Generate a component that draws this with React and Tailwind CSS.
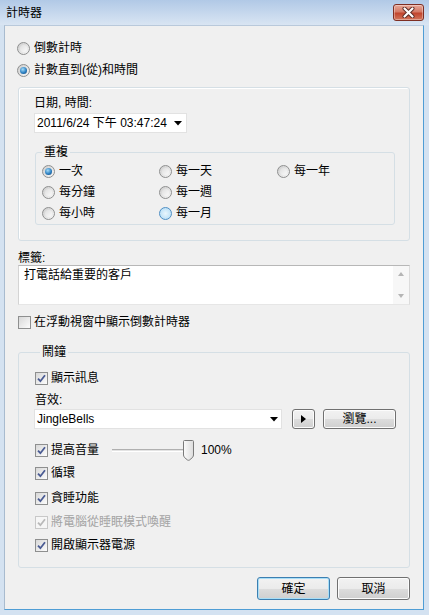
import React from "react";

function Radio({ checked, hover }) {
  if (hover)
    return (
      <span className="flex items-center justify-center w-[13px] h-[13px] rounded-full border border-[#4f8fc4] bg-[radial-gradient(circle_at_50%_50%,#e9f6fd,#aedaf5)] shrink-0" />
    );
  return (
    <span className="flex items-center justify-center w-[13px] h-[13px] rounded-full border border-[#8e8f8f] bg-[linear-gradient(135deg,#cdcdcd,#f7f7f7)] shrink-0">
      {checked ? (
        <span className="w-[7px] h-[7px] rounded-full bg-[radial-gradient(circle_at_40%_35%,#a5dcf8,#2c80c2_55%,#0c3b6c)]" />
      ) : (
        <span className="w-[7px] h-[7px] rounded-full bg-[linear-gradient(135deg,#dedede,#fafafa)]" />
      )}
    </span>
  );
}

function Check({ checked, disabled }) {
  return (
    <span
      className={
        disabled
          ? "flex items-center justify-center w-[13px] h-[13px] border border-[#c8c8c8] bg-[#f6f6f6] shrink-0"
          : "flex items-center justify-center w-[13px] h-[13px] border border-[#8e8f8f] bg-[linear-gradient(135deg,#d8d8d8,#fcfcfc)] shrink-0"
      }
    >
      {checked && (
        <svg width="9" height="9" viewBox="0 0 9 9">
          <path
            d="M1 4.6 L3.4 7.2 L8 1.2"
            fill="none"
            stroke={disabled ? "#b9b9b9" : "#4a5b93"}
            strokeWidth="1.8"
          />
        </svg>
      )}
    </span>
  );
}

function RadioRow({ label, checked, hover }) {
  return (
    <div className="flex items-center h-[16px] gap-[4px]">
      <Radio checked={checked} hover={hover} />
      <span className="leading-[16px]">{label}</span>
    </div>
  );
}

function CheckRow({ label, checked, disabled, className = "" }) {
  return (
    <div className={"flex items-center h-[16px] gap-[3px] " + className}>
      <Check checked={checked} disabled={disabled} />
      <span className={disabled ? "leading-[16px] text-[#a3a3a3]" : "leading-[16px]"}>{label}</span>
    </div>
  );
}

function DownArrow() {
  return (
    <svg width="8" height="5" viewBox="0 0 8 5">
      <path d="M0 0 H8 L4 4.5 Z" fill="#000" />
    </svg>
  );
}

export default function App() {
  return (
    <div className="w-[429px] h-[615px] flex flex-col bg-[#d4e2f1] font-['Liberation_Sans','Noto_Sans_CJK_TC',sans-serif] text-[12px] text-black overflow-hidden">
      {/* Title bar */}
      <div className="h-[25px] shrink-0 flex items-center justify-between pl-[6px] pr-[5px] bg-[linear-gradient(to_bottom,#b1c9e6,#d9e5f3)]">
        <span className="text-[12px] leading-[16px] text-black">計時器</span>
        <div className="w-[31px] h-[17px] rounded-[3px] border border-[#7e2e22] bg-[linear-gradient(to_bottom,#e8a898,#d47a66_45%,#c2452d_55%,#d2765c)] flex items-center justify-center shadow-[inset_0_0_0_1px_rgba(255,255,255,0.35)]">
          <svg width="13" height="11" viewBox="0 0 13 11">
            <path d="M2.5 1.5 L10.5 9.5 M10.5 1.5 L2.5 9.5" stroke="#5a2a22" strokeWidth="4" strokeLinecap="round" />
            <path d="M2.5 1.5 L10.5 9.5 M10.5 1.5 L2.5 9.5" stroke="#ffffff" strokeWidth="2.2" strokeLinecap="round" />
          </svg>
        </div>
      </div>

      {/* Client area */}
      <div className="flex-1 ml-[4px] mr-[5px] mb-[5px] bg-[#f0f0f0] border border-t-[#b9c9db] border-l-[#a8bbcf] border-r-[#4f9dd5] border-b-[#4f9dd5] flex flex-col pl-[13px] pr-[13px] pt-[14px]">
        <div className="pl-[-1px] flex flex-col gap-[6px] -ml-[1px]">
          <RadioRow label="倒數計時" />
          <RadioRow label="計數直到(從)和時間" checked />
        </div>

        {/* Date panel */}
        <div className="mt-[9px] border border-[#d5dfe5] rounded-[3px] shadow-[inset_1px_1px_0_#ffffff] pt-[8px] pl-[15px] pr-[14px] pb-[15px] flex flex-col">
          <div className="leading-[14px] h-[14px]">日期, 時間:</div>
          <div className="mt-[3px] w-[153px] h-[20px] bg-white border border-[#e2e2e2] flex items-center justify-between pl-[2px] pr-[4px]">
            <span className="leading-[16px]">2011/6/24 下午 03:47:24</span>
            <DownArrow />
          </div>
          <fieldset className="mt-[12px] ml-[1px] border border-[#d5dfe5] rounded-[3px] pl-[6px] pt-[4px] pb-[3px]">
            <legend className="px-[2px] leading-[14px]">重複</legend>
            <div className="grid grid-cols-[117px_118px_1fr] grid-rows-[16px_16px_16px] gap-y-[5px]">
              <RadioRow label="一次" checked />
              <RadioRow label="每一天" />
              <RadioRow label="每一年" />
              <RadioRow label="每分鐘" />
              <RadioRow label="每一週" />
              <div />
              <RadioRow label="每小時" />
              <RadioRow label="每一月" hover />
            </div>
          </fieldset>
        </div>

        {/* Label */}
        <div className="mt-[10px] leading-[14px] h-[14px]">標籤:</div>
        <div className="h-[40px] bg-white border border-t-[#b7b7b7] border-l-[#d4d4d4] border-r-[#dcdcdc] border-b-[#e6e6e6] flex">
          <div className="flex-1 pl-[5px] pt-[1px] leading-[16px]">打電話給重要的客戶</div>
          <div className="w-[16px] bg-[#f7f7f7] flex flex-col items-center justify-between py-[6px]">
            <svg width="6" height="4" viewBox="0 0 6 4">
              <path d="M0 4 H6 L3 0 Z" fill="#b5b5b5" />
            </svg>
            <svg width="6" height="4" viewBox="0 0 6 4">
              <path d="M0 0 H6 L3 4 Z" fill="#b5b5b5" />
            </svg>
          </div>
        </div>

        <CheckRow label="在浮動視窗中顯示倒數計時器" className="mt-[9px]" />

        {/* Alarm */}
        <fieldset className="mt-[15px] border border-[#d5dfe5] rounded-[3px] pl-[16px] pr-[13px] pt-[11px] pb-[14px]">
          <legend className="ml-[5px] px-[2px] leading-[14px]">鬧鐘</legend>
          <div className="flex flex-col">
            <CheckRow label="顯示訊息" checked />
            <div className="mt-[7px] leading-[14px] h-[14px]">音效:</div>
            <div className="mt-[2px] flex items-center h-[20px] -ml-[1px]">
              <div className="w-[248px] h-[20px] bg-white border border-[#e2e2e2] flex items-center justify-between pl-[2px] pr-[3px]">
                <span className="leading-[16px]">JingleBells</span>
                <DownArrow />
              </div>
              <button className="ml-[10px] w-[23px] h-[20px] rounded-[3px] border border-[#707070] bg-[linear-gradient(to_bottom,#f2f2f2,#ebebeb_50%,#dddddd_50%,#cfcfcf)] shadow-[inset_0_0_0_1px_#fcfcfc] flex items-center justify-center">
                <svg width="5" height="8" viewBox="0 0 5 8">
                  <path d="M0 0 L5 4 L0 8 Z" fill="#000" />
                </svg>
              </button>
              <button className="ml-[8px] w-[73px] h-[20px] rounded-[3px] border border-[#707070] bg-[linear-gradient(to_bottom,#f2f2f2,#ebebeb_50%,#dddddd_50%,#cfcfcf)] shadow-[inset_0_0_0_1px_#fcfcfc] flex items-center justify-center leading-[16px]">
                瀏覽...
              </button>
            </div>
            <div className="mt-[11px] h-[20px] flex items-center">
              <CheckRow label="提高音量" checked />
              <div className="ml-[13px] relative w-[82px] h-[20px] flex items-center">
                <div className="w-full h-[3px] border-t border-t-[#b0b0b0] border-b border-b-[#ffffff] bg-[#e3e3e3]" />
                <svg className="absolute left-[71px] top-0" width="11" height="21" viewBox="0 0 11 21">
                  <defs>
                    <linearGradient id="thumbg" x1="0" y1="0" x2="1" y2="0">
                      <stop offset="0" stopColor="#fbfbfb" />
                      <stop offset="1" stopColor="#dcdcdc" />
                    </linearGradient>
                  </defs>
                  <path d="M1.5 0.5 H9.5 Q10.5 0.5 10.5 1.5 V15 Q10.5 16 9.5 17.5 L6.5 20 Q5.5 20.6 4.5 20 L1.5 17.5 Q0.5 16 0.5 15 V1.5 Q0.5 0.5 1.5 0.5 Z" fill="url(#thumbg)" stroke="#7a7a7a" />
                </svg>
              </div>
              <span className="ml-[7px] leading-[16px]">100%</span>
            </div>
            <CheckRow label="循環" checked className="mt-[5px]" />
            <CheckRow label="貪睡功能" checked className="mt-[9px]" />
            <CheckRow label="將電腦從睡眠模式喚醒" checked disabled className="mt-[8px]" />
            <CheckRow label="開啟顯示器電源" checked className="mt-[7px]" />
          </div>
        </fieldset>

        {/* Buttons */}
        <div className="mt-[9px] flex justify-end gap-[7px]">
          <button className="w-[73px] h-[23px] rounded-[3px] border border-[#3c7fb1] bg-[linear-gradient(to_bottom,#f2f2f2,#ebebeb_50%,#dddddd_50%,#cfcfcf)] shadow-[inset_0_0_0_1px_#a8def7] flex items-center justify-center leading-[16px]">
            確定
          </button>
          <button className="w-[73px] h-[23px] rounded-[3px] border border-[#707070] bg-[linear-gradient(to_bottom,#f2f2f2,#ebebeb_50%,#dddddd_50%,#cfcfcf)] shadow-[inset_0_0_0_1px_#fcfcfc] flex items-center justify-center leading-[16px]">
            取消
          </button>
        </div>
      </div>
    </div>
  );
}
